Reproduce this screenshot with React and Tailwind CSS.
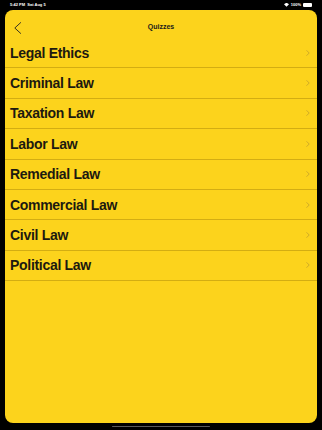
import React from 'react';

const subjects = [
  'Legal Ethics',
  'Criminal Law',
  'Taxation Law',
  'Labor Law',
  'Remedial Law',
  'Commercial Law',
  'Civil Law',
  'Political Law',
];

function Chevron({ className }) {
  return (
    <svg viewBox="0 0 6 10" className={className} fill="none" stroke="currentColor" strokeWidth="1.3" strokeLinecap="round" strokeLinejoin="round">
      <path d="M1 1l4 4-4 4" />
    </svg>
  );
}

export default function App() {
  return (
    <div className="w-[322px] h-[430px] bg-black flex flex-col overflow-hidden" style={{ fontFamily: '"Liberation Sans", Arial, sans-serif' }}>
      {/* status bar */}
      <div className="h-[10px] flex items-center justify-between px-[10px] text-white text-[4px] font-semibold">
        <span>5:42 PM&nbsp;&nbsp;Sat Aug 5</span>
        <div className="flex items-center gap-[2px]">
          <svg viewBox="0 0 10 8" className="w-[5px] h-[4px]" fill="white">
            <path d="M5 7.5L0 2.5a7 7 0 0 1 10 0z" />
          </svg>
          <span>100%</span>
          <div className="w-[9px] h-[4px] rounded-[1px] bg-white" />
        </div>
      </div>

      {/* card */}
      <div className="flex-1 mx-[5px] rounded-[8px] bg-[#fcd31c] flex flex-col">
        <div className="h-[28px] relative flex items-center justify-center">
          <svg viewBox="0 0 10 14" className="absolute left-[8px] top-[11px] w-[9px] h-[14px] text-[#222]" fill="none" stroke="currentColor" strokeWidth="1" strokeLinecap="round" strokeLinejoin="round">
            <path d="M8.5 1L2 7l6.5 6" />
          </svg>
          <span className="text-[7px] font-bold text-[#1a1a1a] mt-[6px]">Quizzes</span>
        </div>
        <div className="flex flex-col">
          {subjects.map((s) => (
            <div key={s} className="h-[30.4px] border-b border-[#d3ad12] flex items-center justify-between pl-[5px] pr-[7px]">
              <span className="text-[14px] font-bold tracking-[-0.3px] text-[#1c1a10] mt-[1px]">{s}</span>
              <Chevron className="w-[4px] h-[6px] text-[#c2a02c]" />
            </div>
          ))}
        </div>
      </div>

      {/* home indicator */}
      <div className="h-[7px] flex items-center justify-center">
        <div className="w-[98px] h-[1.5px] rounded-full bg-[#5a5a5a]" />
      </div>
    </div>
  );
}
